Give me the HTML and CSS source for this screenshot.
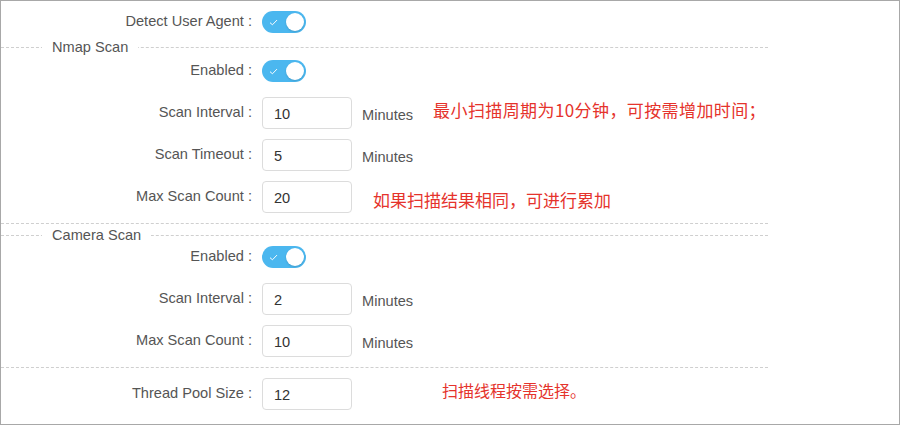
FILE: index.html
```html
<!DOCTYPE html>
<html>
<head>
<meta charset="utf-8">
<link rel="stylesheet" href="styles.css">
</head>
<body>
<div class="frame">
  <div class="row">
    <div class="label">Detect User Agent :</div>
    <span class="switch"><svg class="check" viewBox="0 0 10 8" width="9" height="7"><path d="M1 4.2 L3.8 6.6 L9 1.2" fill="none" stroke="#fff" stroke-width="1.1"/></svg><span class="knob"></span></span>
  </div>

  <fieldset class="group">
    <legend>Nmap Scan</legend>
    <div class="rows">
      <div class="row">
        <div class="label">Enabled :</div>
        <span class="switch"><svg class="check" viewBox="0 0 10 8" width="9" height="7"><path d="M1 4.2 L3.8 6.6 L9 1.2" fill="none" stroke="#fff" stroke-width="1.1"/></svg><span class="knob"></span></span>
      </div>
      <div class="row">
        <div class="label">Scan Interval :</div>
        <div class="input">10</div>
        <span class="unit">Minutes</span>
        <span class="note note-1">最小扫描周期为10分钟，可按需增加时间；</span>
      </div>
      <div class="row">
        <div class="label">Scan Timeout :</div>
        <div class="input">5</div>
        <span class="unit">Minutes</span>
      </div>
      <div class="row">
        <div class="label">Max Scan Count :</div>
        <div class="input">20</div>
        <span class="note note-2">如果扫描结果相同，可进行累加</span>
      </div>
    </div>
  </fieldset>

  <fieldset class="group group-2">
    <legend>Camera Scan</legend>
    <div class="rows rows-tight">
      <div class="row">
        <div class="label">Enabled :</div>
        <span class="switch"><svg class="check" viewBox="0 0 10 8" width="9" height="7"><path d="M1 4.2 L3.8 6.6 L9 1.2" fill="none" stroke="#fff" stroke-width="1.1"/></svg><span class="knob"></span></span>
      </div>
      <div class="row">
        <div class="label">Scan Interval :</div>
        <div class="input">2</div>
        <span class="unit">Minutes</span>
      </div>
      <div class="row">
        <div class="label">Max Scan Count :</div>
        <div class="input">10</div>
        <span class="unit">Minutes</span>
      </div>
    </div>
  </fieldset>

  <div class="row row-last">
    <div class="label">Thread Pool Size :</div>
    <div class="input">12</div>
    <span class="note note-3">扫描线程按需选择。</span>
  </div>
</div>
</body>
</html>
```

FILE: styles.css
```css
* { box-sizing: border-box; }
html, body { margin: 0; padding: 0; background: #fff; }
body {
  font-family: "Liberation Sans", Arial, "Noto Sans CJK SC", sans-serif;
  font-size: 14.6px;
  color: #555;
}
.frame {
  width: 900px;
  height: 425px;
  border: 1px solid #a8a8a8;
  padding-top: 5px;
  overflow: hidden;
}
.row {
  display: flex;
  align-items: center;
  height: 32px;
}
.label {
  width: 251px;
  text-align: right;
  padding-bottom: 2px;
  color: #555;
  white-space: nowrap;
}
.switch {
  margin-left: 10px;
  width: 44px;
  height: 22px;
  border-radius: 11px;
  background: #4bb7ef;
  display: flex;
  align-items: center;
  justify-content: space-between;
  padding: 0 2px 0 7px;
}
.check { display: block; }
.knob {
  width: 18px;
  height: 18px;
  border-radius: 50%;
  background: #fff;
  box-shadow: 0 1px 2px rgba(0,0,0,0.15);
}
.input {
  margin-left: 10px;
  width: 90px;
  height: 32px;
  border: 1px solid #dcdcdc;
  border-radius: 4px;
  padding: 0 11px;
  display: flex;
  align-items: center;
  padding-top: 2px;
  color: #333;
}
.unit {
  margin-left: 10px;
  padding-top: 4px;
  color: #555;
}
.note {
  font-family: "Noto Sans CJK SC", sans-serif;
  color: #e5332c;
  font-size: 17px;
  white-space: nowrap;
}
.note-1 { margin-left: 20px; padding-bottom: 8px; letter-spacing: 0.4px; }
.note-2 { margin-left: 21px; padding-top: 4px; }
.note-3 { margin-left: 90px; font-size: 16px; padding-bottom: 8px; }

.group {
  width: 767px;
  margin: 2px 0 0 0;
  padding: 0 0 10px 0;
  border: none;
  border-top: 1px dashed #cfcfcf;
  border-bottom: 1px dashed #cfcfcf;
  min-width: 0;
}
.group legend {
  margin-left: 41px;
  padding: 0 10px;
  line-height: 15px;
  height: 15px;
  color: #555;
}
.group-2 { margin-top: 4px; }
.rows {
  display: flex;
  flex-direction: column;
  gap: 10px;
}
.rows-tight { margin-top: -2px; }
.row-last { margin-top: 10px; }
```
